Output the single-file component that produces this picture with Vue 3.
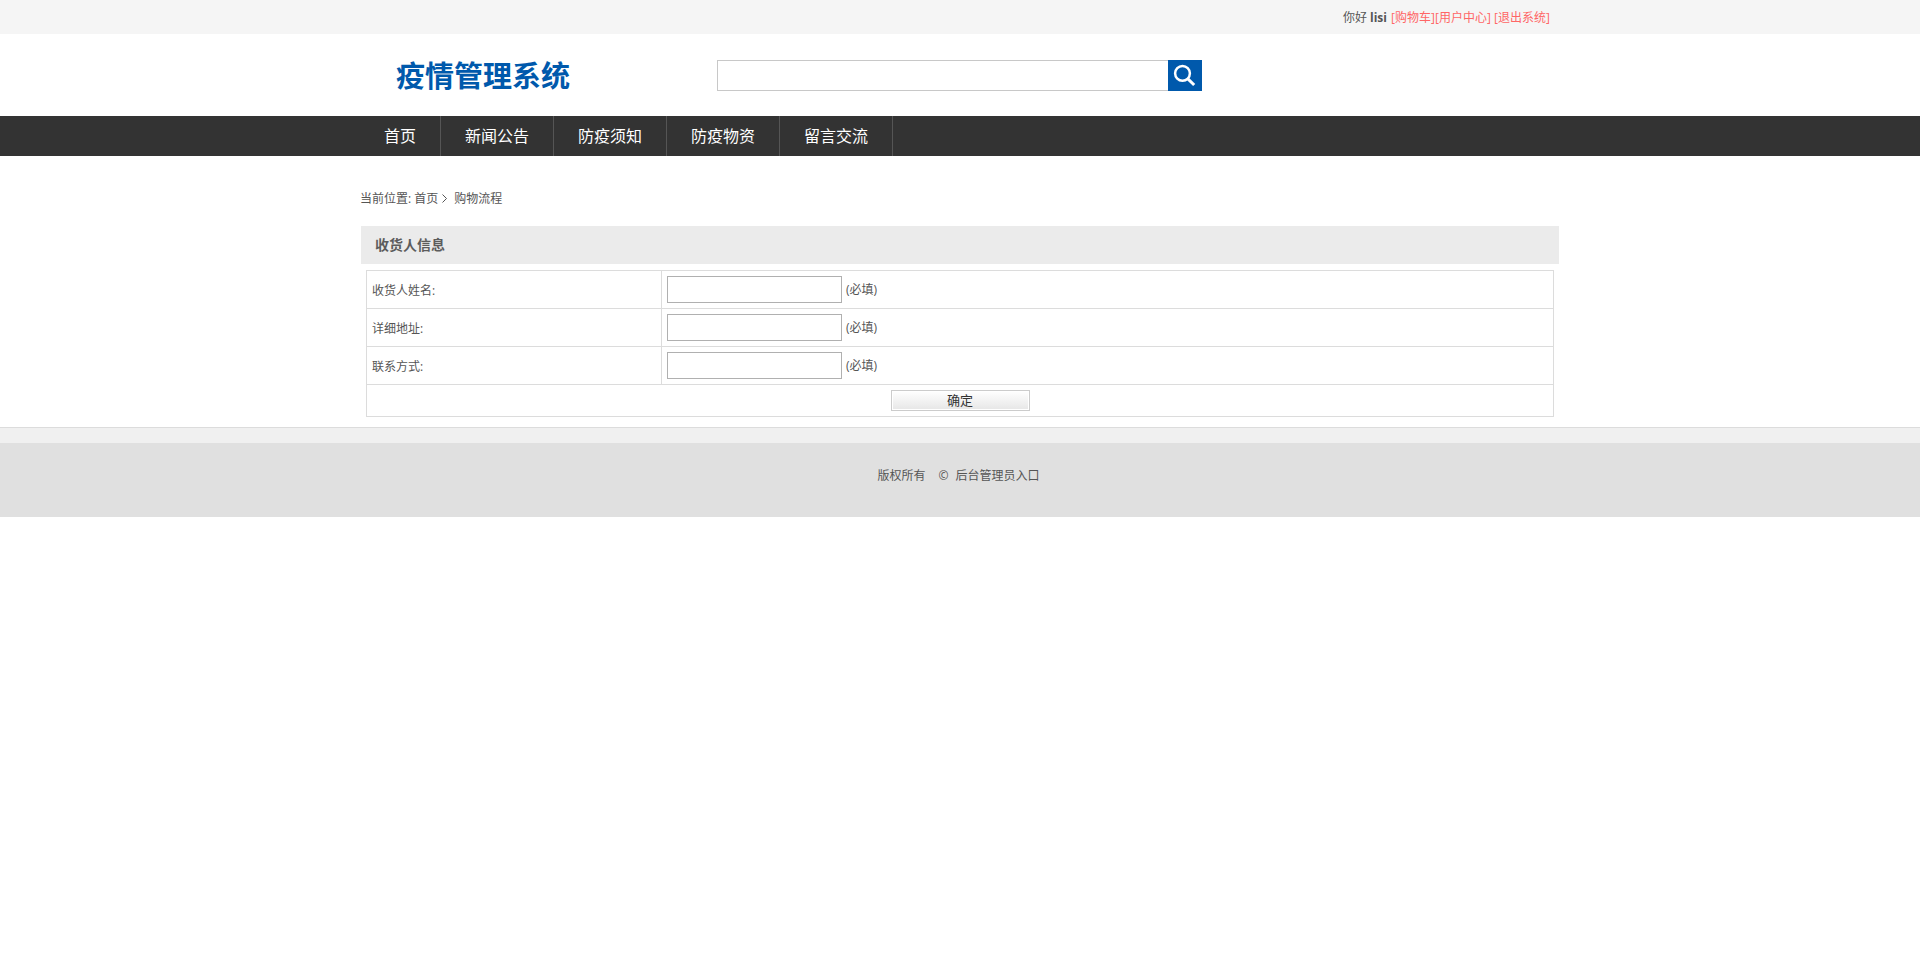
<template>
  <div class="page">
    <!-- Top bar -->
    <div class="top-bar">
      <div class="container user-links">
        <span class="hello">你好</span>
        <strong>lisi</strong>
        <a class="cart" href="#">[购物车]</a>
        <a class="center" href="#">[用户中心]</a>
        <a class="logout" href="#">[退出系统]</a>
      </div>
    </div>

    <!-- Logo and search -->
    <header class="container header">
      <h1 class="logo">疫情管理系统</h1>
      <form class="search" @submit.prevent>
        <input v-model="keyword" type="text" />
        <button type="submit" aria-label="搜索">
          <svg width="34" height="31" viewBox="0 0 34 31">
            <circle cx="14.5" cy="13.3" r="7.4" />
            <path d="M19.6 18.6l6.6 6.4" />
          </svg>
        </button>
      </form>
    </header>

    <nav class="nav">
      <ul class="container">
        <li v-for="item in menus" :key="item">
          <a href="#">{{ item }}</a>
        </li>
      </ul>
    </nav>

    <main class="container">
      <div class="position">
        <span>当前位置:</span>
        <a href="#">首页</a>
        <svg width="5" height="9" viewBox="0 0 5 9"><path d="M.5.5l4 4-4 4" /></svg>
        <span>购物流程</span>
      </div>

      <!-- Receiver form -->
      <h2 class="section-title">收货人信息</h2>
      <form class="receiver" @submit.prevent>
        <div v-for="field in fields" :key="field.key" class="row">
          <label :for="field.key">{{ field.label }}</label>
          <div class="cell">
            <input :id="field.key" v-model="form[field.key]" type="text" />
            <span>(必填)</span>
          </div>
        </div>
        <div class="submit-row">
          <button type="submit">确定</button>
        </div>
      </form>
    </main>

    <footer class="footer">
      <div class="footer-strip"></div>
      <div class="copyright">
        <span>版权所有</span>
        <span class="mark">©</span>
        <a href="#">后台管理员入口</a>
      </div>
    </footer>
  </div>
</template>

<script setup>
import { reactive, ref } from 'vue'

const keyword = ref('')
const menus = ['首页', '新闻公告', '防疫须知', '防疫物资', '留言交流']

const fields = [
  { key: 'name', label: '收货人姓名:' },
  { key: 'address', label: '详细地址:' },
  { key: 'phone', label: '联系方式:' }
]
const form = reactive({ name: '', address: '', phone: '' })
</script>

<style>
body {
  margin: 0;
  background: #fff;
}
</style>

<style scoped>
* {
  box-sizing: border-box;
}
.page {
  font-family: "Open Sans", "Noto Sans CJK SC", sans-serif;
  font-size: 12px;
  line-height: 18px;
  color: #555;
}
a {
  color: inherit;
  text-decoration: none;
}
.container {
  width: 1200px;
  margin: 0 auto;
}
input {
  margin: 0;
  padding: 0 4px;
  background: #fff;
  font: inherit;
  outline: none;
}
button {
  margin: 0;
  padding: 0;
  font: inherit;
  cursor: pointer;
}

/* Top bar */
.top-bar {
  height: 34px;
  background: #f5f5f5;
}
.user-links {
  display: flex;
  align-items: center;
  height: 34px;
  padding: 2px 0 0 983px;
  white-space: nowrap;
}
.user-links a {
  color: #f66;
}
.hello {
  width: 27px;
}
.user-links strong {
  width: 21px;
}
.cart {
  width: 44px;
}
.center {
  width: 59px;
}

/* Logo and search */
.header {
  display: flex;
  height: 82px;
  padding: 26px 0 0 36px;
}
.logo {
  width: 321px;
  margin: 0;
  font-size: 29px;
  line-height: 32px;
  font-weight: bold;
  color: #0059ac;
}
.search {
  display: flex;
  height: 31px;
}
.search input {
  width: 451px;
  border: 1px solid #c8c8c8;
  border-right: none;
}
.search button {
  width: 34px;
  height: 31px;
  border: none;
  background: #0059ac;
}
.search svg {
  display: block;
  fill: none;
  stroke: #fff;
  stroke-width: 2.5;
}
.search path {
  stroke-width: 3;
}

/* Main menu */
.nav {
  height: 40px;
  background: #333;
}
.nav ul {
  display: flex;
  padding: 0;
  list-style: none;
}
.nav li {
  height: 40px;
  padding: 0 24px;
  border-right: 1px solid #555;
  font-size: 16px;
  line-height: 40px;
  color: #fff;
}

/* Breadcrumb */
.position {
  display: flex;
  align-items: center;
  height: 70px;
  padding-top: 15px;
}
.position a {
  margin: 0 4px 0 3px;
}
.position svg {
  margin-right: 7px;
  fill: none;
  stroke: #555;
}

/* Receiver form */
.section-title {
  height: 38px;
  margin: 0 1px;
  padding-left: 14px;
  background: #ebebeb;
  font-size: 14px;
  line-height: 38px;
  font-weight: bold;
  color: #5c5c5c;
}
.receiver {
  width: 1188px;
  margin: 6px 0 10px 6px;
  border: 1px solid #dcdcdc;
}
.row {
  display: flex;
  height: 38px;
  border-bottom: 1px solid #dcdcdc;
}
.row label {
  width: 295px;
  padding-left: 5px;
  border-right: 1px solid #dcdcdc;
  line-height: 39px;
}
.cell {
  display: flex;
  align-items: center;
  gap: 4px;
  padding-left: 5px;
}
.cell input {
  width: 175px;
  height: 27px;
  border: 1px solid #b0b0b0;
}
.submit-row {
  display: flex;
  justify-content: center;
  align-items: center;
  height: 31px;
}
.submit-row button {
  width: 139px;
  height: 21px;
  border: 1px solid #ccc;
  background: linear-gradient(#fff, #e6e6e6);
  box-shadow: inset 0 0 0 1px #fff;
  font-size: 13px;
  line-height: 19px;
  color: #333;
}

/* Footer */
.footer-strip {
  height: 16px;
  border-top: 1px solid #dcdcdc;
  background: #f0f0f0;
}
.copyright {
  display: flex;
  justify-content: center;
  height: 74px;
  padding: 24px 3px 0 0;
  background: #e0e0e0;
}
.mark {
  margin: 0 7px 0 13px;
}
</style>
